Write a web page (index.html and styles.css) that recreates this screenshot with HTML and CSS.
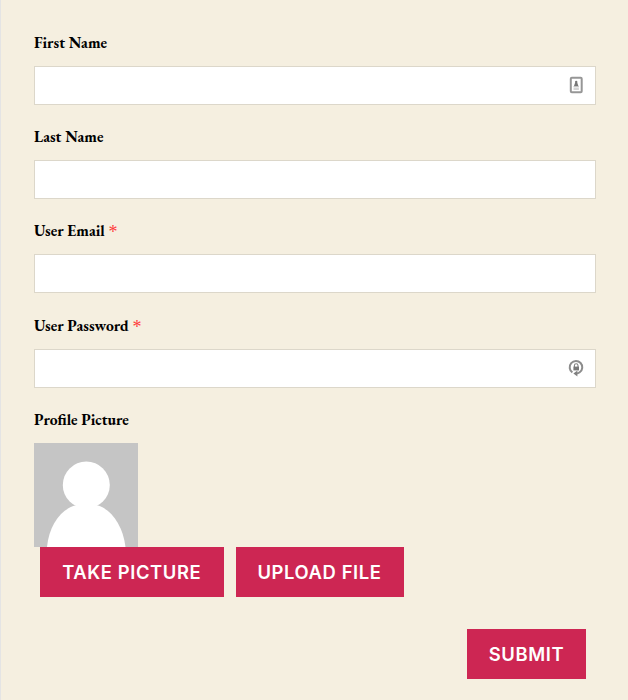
FILE: index.html
```
<!DOCTYPE html>
<html lang="en">
<head>
    <meta charset="UTF-8">
    <meta name="viewport" content="width=device-width, initial-scale=1.0">
    <title>Register</title>
    <link rel="stylesheet" href="styles.css">
</head>
<body>
    <form class="register-form">
        <div class="field">
            <label for="first_name">First Name</label>
            <div class="input-wrap">
                <input type="text" id="first_name">
                <svg class="input-icon" width="16" height="18" viewBox="0 0 16 18">
                    <rect x="2.8" y="1.8" width="10.9" height="14.4" rx="1" fill="#fff" stroke="#969696" stroke-width="2"/>
                    <circle cx="8.2" cy="6" r="1.2" fill="#777"/>
                    <path d="M7.2 6.5h2l1.2 3.5H6z" fill="#777"/>
                    <path d="M5.5 10.8h5.4M5.5 13h5.4" stroke="#aaa" stroke-width="1"/>
                </svg>
            </div>
        </div>

        <div class="field">
            <label for="last_name">Last Name</label>
            <div class="input-wrap">
                <input type="text" id="last_name">
            </div>
        </div>

        <div class="field">
            <label for="user_email">User Email <span class="required">*</span></label>
            <div class="input-wrap">
                <input type="email" id="user_email">
            </div>
        </div>

        <div class="field">
            <label for="user_pass">User Password <span class="required">*</span></label>
            <div class="input-wrap">
                <input type="password" id="user_pass">
                <svg class="input-icon" width="16" height="18" viewBox="0 0 16 18">
                    <path d="M4.4 13.4A6.3 6.3 0 1 1 11.7 13.3Q10.2 14.5 8.4 14.6" fill="none" stroke="#8c8c8c" stroke-width="2"/>
                    <path d="M9.4 11.6v6L5.4 14.6z" fill="#808080"/>
                    <path d="M6.4 8V6.6a1.8 1.8 0 0 1 3.6 0V8" fill="none" stroke="#808080" stroke-width="1.1"/>
                    <rect x="5.4" y="7.6" width="5.6" height="3.8" fill="#777"/>
                </svg>
            </div>
        </div>

        <div class="field picture-field">
            <label>Profile Picture</label>
            <svg class="avatar" width="104" height="104" viewBox="0 0 104 104">
                <rect width="104" height="104" fill="#c5c5c5"/>
                <circle cx="52.3" cy="42" r="23.5" fill="#fff"/>
                <path d="M13 104C15 83 26 67 41 62.5H64C78 67 89 83 91.5 104z" fill="#fff"/>
            </svg>
            <div class="picture-buttons">
                <button type="button" class="btn-take">Take Picture</button>
                <button type="button" class="btn-upload">Upload File</button>
            </div>
        </div>

        <div class="form-footer">
            <button type="submit" class="btn-submit">Submit</button>
        </div>
    </form>
</body>
</html>
```

FILE: styles.css
```
* {
    box-sizing: border-box;
}
body {
    margin: 0;
    background: #f5efe0;
    color: #000;
    font-family: "EB Garamond", Garamond, "Liberation Serif", serif;
}
.register-form {
    min-height: 700px;
    padding: 29.8px 32px 0 33px;
    border-left: 1px solid #e4e4e4;
}
.field {
    margin-bottom: 19.33px;
}
label {
    display: block;
    height: 26px;
    margin-bottom: 10px;
    font-size: 15.6px;
    font-weight: 700;
    line-height: 26px;
}
.required {
    color: #ff3b3b;
    font-family: "Liberation Serif", serif;
    font-weight: normal;
    font-size: 18px;
    line-height: 20px;
    vertical-align: -2px;
}
.input-wrap {
    position: relative;
    height: 39px;
}
input {
    display: block;
    width: 100%;
    height: 39px;
    padding: 8px 12px;
    background: #fff;
    border: 1px solid #dcd7ca;
    border-radius: 0;
}
.input-icon {
    position: absolute;
    top: 10px;
    right: 12px;
}
.picture-field {
    margin-bottom: 0;
}
.avatar {
    display: block;
}
.picture-buttons {
    display: flex;
    gap: 12px;
    padding-left: 6px;
}
button {
    height: 50px;
    padding: 0 0 1px;
    background: #cd2653;
    color: #fff;
    border: none;
    font-family: Inter, sans-serif;
    font-size: 18.4px;
    font-weight: 600;
    letter-spacing: 0.6px;
    text-transform: uppercase;
    white-space: nowrap;
    cursor: pointer;
}
.btn-take {
    width: 183.5px;
}
.btn-upload {
    width: 168px;
}
.btn-submit {
    width: 119px;
}
.form-footer {
    display: flex;
    justify-content: flex-end;
    padding: 32px 10px 0 0;
}
```
